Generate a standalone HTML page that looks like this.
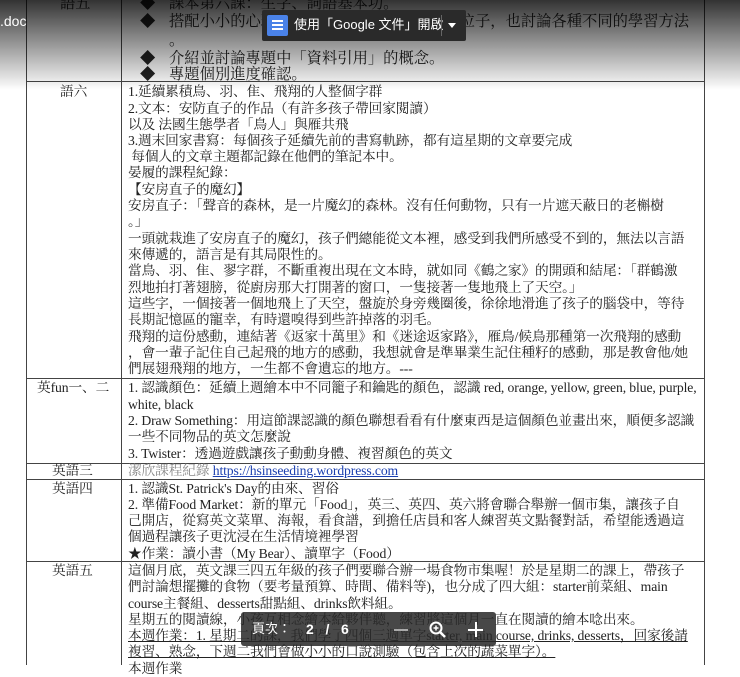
<!DOCTYPE html>
<html><head><meta charset="utf-8">
<style>
html,body{margin:0;padding:0;}
body{width:740px;height:665px;overflow:hidden;background:#fff;position:relative;
font-family:"Liberation Serif","Noto Serif CJK SC","Noto Serif CJK TC",serif;font-size:13.7px;color:#222;}
.l{position:absolute;white-space:nowrap;line-height:16px;letter-spacing:-0.12px;}
.b{font-size:15.3px;line-height:18px;letter-spacing:0;}
.h{position:absolute;background:#444;}
.u{text-decoration:underline;}
.top{position:absolute;left:0;top:0;width:740px;height:90px;background:linear-gradient(#000c,#0000);pointer-events:none;}
</style></head><body>
<div class="h" style="left:26px;top:0;width:1px;height:665px"></div>
<div class="h" style="left:121px;top:0;width:1px;height:665px"></div>
<div class="h" style="left:704px;top:0;width:1px;height:665px"></div>
<div class="h" style="left:26px;top:81px;width:679px;height:1px"></div>
<div class="h" style="left:26px;top:378px;width:679px;height:1px"></div>
<div class="h" style="left:26px;top:463px;width:679px;height:1px"></div>
<div class="h" style="left:26px;top:479px;width:679px;height:1px"></div>
<div class="h" style="left:26px;top:561px;width:679px;height:1px"></div>

<div class="l b" style="left:60px;top:-5px">語五</div>
<div class="l b" style="left:140px;top:-5px">◆</div>
<div class="l b" style="left:169px;top:-5px">課本第六課：生字、詞語基本功。</div>
<div class="l b" style="left:140px;top:13px">◆</div>
<div class="l b" style="left:169px;top:13px">搭配小小的心理學，讓孩子們認識學習的新位子，也討論各種不同的學習方法</div>
<div class="l b" style="left:169px;top:32px">。</div>
<div class="l b" style="left:140px;top:50px">◆</div>
<div class="l b" style="left:169px;top:50px">介紹並討論專題中「資料引用」的概念。</div>
<div class="l b" style="left:140px;top:66px">◆</div>
<div class="l b" style="left:169px;top:66px">專題個別進度確認。</div>

<div class="l" style="left:60px;top:84px">語六</div>
<div class="l" style="left:128px;top:84px">1.延續累積鳥、羽、隹、飛翔的人整個字群</div>
<div class="l" style="left:128px;top:101px">2.文本：安防直子的作品（有許多孩子帶回家閱讀）</div>
<div class="l" style="left:128px;top:117px">以及 法國生態學者「鳥人」與雁共飛</div>
<div class="l" style="left:128px;top:133px">3.週末回家書寫：每個孩子延續先前的書寫軌跡，都有這星期的文章要完成</div>
<div class="l" style="left:128px;top:149px">&nbsp;每個人的文章主題都記錄在他們的筆記本中。</div>
<div class="l" style="left:128px;top:165px">晏履的課程紀錄：</div>
<div class="l" style="left:128px;top:182px">【安房直子的魔幻】</div>
<div class="l" style="left:128px;top:198px">安房直子：「聲音的森林，是一片魔幻的森林。沒有任何動物，只有一片遮天蔽日的老槲樹</div>
<div class="l" style="left:128px;top:214px">。」</div>
<div class="l" style="left:128px;top:231px">一頭就栽進了安房直子的魔幻，孩子們總能從文本裡，感受到我們所感受不到的，無法以言語</div>
<div class="l" style="left:128px;top:247px">來傳遞的，語言是有其局限性的。</div>
<div class="l" style="left:128px;top:263px">當鳥、羽、隹、翏字群，不斷重複出現在文本時，就如同《鶴之家》的開頭和結尾：「群鶴激</div>
<div class="l" style="left:128px;top:280px">烈地拍打著翅膀，從廚房那大打開著的窗口，一隻接著一隻地飛上了天空。」</div>
<div class="l" style="left:128px;top:296px">這些字，一個接著一個地飛上了天空，盤旋於身旁幾圈後，徐徐地滑進了孩子的腦袋中，等待</div>
<div class="l" style="left:128px;top:312px">長期記憶區的寵幸，有時還嗅得到些許掉落的羽毛。</div>
<div class="l" style="left:128px;top:329px">飛翔的這份感動，連結著《返家十萬里》和《迷途返家路》，雁鳥/候鳥那種第一次飛翔的感動</div>
<div class="l" style="left:128px;top:345px">，會一輩子記住自己起飛的地方的感動，我想就會是準畢業生記住種籽的感動，那是教會他/她</div>
<div class="l" style="left:128px;top:361px">們展翅飛翔的地方，一生都不會遺忘的地方。---</div>

<div class="l" style="left:37px;top:380px">英fun一、二</div>
<div class="l" style="left:128px;top:380px">1. 認識顏色：延續上週繪本中不同籠子和鑰匙的顏色，認識 red, orange, yellow, green, blue, purple,</div>
<div class="l" style="left:128px;top:397px">white, black</div>
<div class="l" style="left:128px;top:413px">2. Draw Something：用這節課認識的顏色聯想看看有什麼東西是這個顏色並畫出來，順便多認識</div>
<div class="l" style="left:128px;top:429px">一些不同物品的英文怎麼說</div>
<div class="l" style="left:128px;top:446px">3. Twister：透過遊戲讓孩子動動身體、複習顏色的英文</div>

<div class="l" style="left:52px;top:463px">英語三</div>
<div class="l" style="left:128px;top:463px"><span style="color:#888">潔欣課程紀錄</span> <span class="u" style="color:#1a3fb0">https://hsinseeding.wordpress.com</span></div>

<div class="l" style="left:52px;top:481px">英語四</div>
<div class="l" style="left:128px;top:481px">1. 認識St. Patrick's Day的由來、習俗</div>
<div class="l" style="left:128px;top:497px">2. 準備Food Market：新的單元「Food」，英三、英四、英六將會聯合舉辦一個市集，讓孩子自</div>
<div class="l" style="left:128px;top:513px">己開店，從寫英文菜單、海報，看食譜，到擔任店員和客人練習英文點餐對話，希望能透過這</div>
<div class="l" style="left:128px;top:529px">個過程讓孩子更沈浸在生活情境裡學習</div>
<div class="l" style="left:128px;top:546px">★作業：讀小書（My Bear）、讀單字（Food）</div>

<div class="l" style="left:52px;top:563px">英語五</div>
<div class="l" style="left:128px;top:563px">這個月底，英文課三四五年級的孩子們要聯合辦一場食物市集喔！於是星期二的課上，帶孩子</div>
<div class="l" style="left:128px;top:579px">們討論想擺攤的食物（要考量預算、時間、備料等)，也分成了四大組：starter前菜組、main</div>
<div class="l" style="left:128px;top:596px">course主餐組、desserts甜點組、drinks飲料組。</div>
<div class="l" style="left:128px;top:612px">星期五的閱讀線，小孩互相念繪本給夥伴聽，練習將這個月一直在閱讀的繪本唸出來。</div>
<div class="l u" style="left:128px;top:628px">本週作業：1. 星期二的課，我們學了四個三週單字starter, main course, drinks, desserts，回家後請</div>
<div class="l u" style="left:128px;top:644px">複習、熟念，下週二我們會做小小的口說測驗（包含上次的蔬菜單字）。</div>
<div class="l" style="left:128px;top:661px">本週作業</div>

<div class="top"></div>
<div class="l" style="left:0;top:13px;color:#fff;font-family:'Liberation Sans',sans-serif;font-size:14px;letter-spacing:0">.doc</div>

<div style="position:absolute;left:262px;top:10px;width:204px;height:31px;background:#2a2a2a;border-radius:2px;"></div>
<div style="position:absolute;left:267px;top:15px;width:21px;height:21px;background:#4a82e8;border-radius:2px;"></div>
<div style="position:absolute;left:272px;top:20px;width:11px;height:2px;background:#fff"></div>
<div style="position:absolute;left:272px;top:24px;width:11px;height:2px;background:#fff"></div>
<div style="position:absolute;left:272px;top:28px;width:11px;height:2px;background:#fff"></div>
<div class="l" style="left:294px;top:17px;color:#fff;font-family:'Liberation Sans','Noto Sans CJK TC',sans-serif;font-size:13px;letter-spacing:0">使用「Google 文件」開啟</div>
<div style="position:absolute;left:441px;top:15px;width:1px;height:21px;background:#666"></div>
<div style="position:absolute;left:448px;top:23px;width:0;height:0;border-left:4px solid transparent;border-right:4px solid transparent;border-top:5px solid #fff"></div>

<div style="position:absolute;left:241px;top:612px;width:255px;height:34px;background:rgba(40,40,40,0.85);border-radius:3px;"></div>
<div class="l" style="left:252px;top:621px;color:#fff;font-family:'Liberation Sans','Noto Sans CJK TC',sans-serif;font-size:13px;letter-spacing:0">頁次：</div>
<div class="l" style="left:306px;top:621px;color:#fff;font-family:'Liberation Sans',sans-serif;font-size:14px;font-weight:bold;letter-spacing:0">2&nbsp;&nbsp;&nbsp;/&nbsp;&nbsp;&nbsp;6</div>
<div style="position:absolute;left:394px;top:629px;width:14px;height:2px;background:#aaa"></div>
<svg style="position:absolute;left:429px;top:621px" width="18" height="18" viewBox="0 0 18 18"><circle cx="7" cy="7" r="5.5" fill="none" stroke="#fff" stroke-width="2"/><path d="M11 11l5 5" stroke="#fff" stroke-width="2.5"/><path d="M4.5 7h5M7 4.5v5" stroke="#fff" stroke-width="1.5"/></svg>
<div style="position:absolute;left:468px;top:629px;width:15px;height:2px;background:#fff"></div>
<div style="position:absolute;left:475px;top:622px;width:2px;height:15px;background:#fff"></div>
</body></html>
